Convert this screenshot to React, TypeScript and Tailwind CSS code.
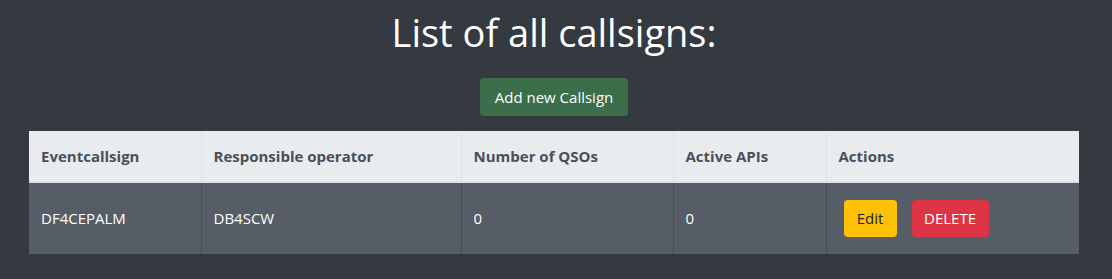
export default function App() {
    const columns = [
        { label: "Eventcallsign", width: "w-[172px]" },
        { label: "Responsible operator", width: "w-[260px]" },
        { label: "Number of QSOs", width: "w-[212px]" },
        { label: "Active APIs", width: "w-[153px]" },
        { label: "Actions", width: "w-[253px]" },
    ];

    return (
        <div className="min-h-[279px] bg-[#343a40] px-[29px] pt-[8px] text-white" style={{ fontFamily: '"Open Sans", "Noto Sans", sans-serif' }}>
            {/* Title */}
            <h1 className="text-center text-[38px] leading-[48px] font-normal pr-[4px]">List of all callsigns:</h1>

            {/* Add button */}
            <div className="flex justify-center mt-[22px] mb-[15px] pr-[4px]">
                <button className="h-[38px] w-[148px] rounded bg-[#3b6e4a] text-[15px] text-white">Add new Callsign</button>
            </div>

            {/* Table */}
            <table className="w-[1050px] table-fixed border-collapse text-[15px]">
                <thead>
                    <tr className="bg-[#e9ecef] text-[#495057]">
                        {columns.map((c, i) => (
                            <th
                                key={c.label}
                                className={`${c.width} h-[51px] px-3 text-left align-middle font-bold border-b-2 border-b-[#dee2e6] ${i > 0 ? "border-l border-l-[#dee2e6]" : ""}`}
                            >
                                {c.label}
                            </th>
                        ))}
                    </tr>
                </thead>
                <tbody>
                    <tr className="bg-[#565d66] h-[72px]">
                        <td className="px-3 align-middle">DF4CEPALM</td>
                        <td className="px-3 align-middle border-l border-l-[#454d55]">DB4SCW</td>
                        <td className="px-3 align-middle border-l border-l-[#454d55]">0</td>
                        <td className="px-3 align-middle border-l border-l-[#454d55]">0</td>
                        <td className="px-3 align-middle border-l border-l-[#454d55]">
                            <div className="flex gap-[15px] pl-[5px]">
                                <button className="h-[37px] w-[53px] rounded bg-[#ffc107] text-[#212529]">Edit</button>
                                <button className="h-[37px] w-[77px] rounded bg-[#dc3545] text-white">DELETE</button>
                            </div>
                        </td>
                    </tr>
                </tbody>
            </table>
        </div>
    );
}
